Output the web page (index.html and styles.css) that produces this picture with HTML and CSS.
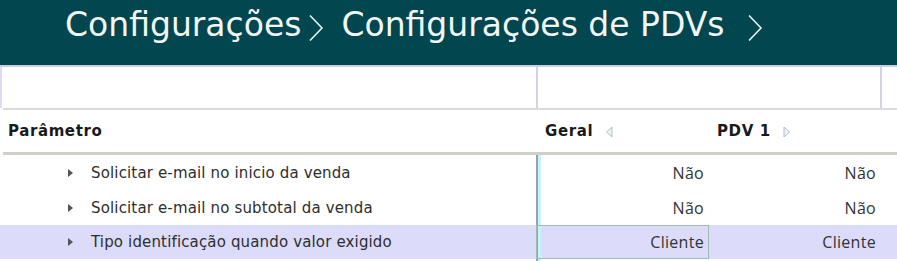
FILE: index.html
```html
<!DOCTYPE html>
<html lang="pt">
<head>
<meta charset="utf-8">
<link rel="stylesheet" href="styles.css">
</head>
<body>
<header class="title">
  <span class="crumb">Configurações</span>
  <svg class="chev" width="16" height="28" viewBox="0 0 16 28"><path d="M2 1.5 L14 14 L2 26.5" fill="none" stroke="#e8f0f0" stroke-width="1.6"/></svg>
  <span class="crumb">Configurações de PDVs</span>
  <svg class="chev chev-last" width="16" height="28" viewBox="0 0 16 28"><path d="M2 1.5 L14 14 L2 26.5" fill="none" stroke="#e8f0f0" stroke-width="1.6"/></svg>
</header>
<div class="grid">
  <div class="row blank">
    <div class="cell c-param"></div>
    <div class="cell c-span"></div>
    <div class="cell c-rest"></div>
  </div>
  <div class="row head">
    <div class="cell c-param"><b>Parâmetro</b></div>
    <div class="cell c-val hcell"><b>Geral</b>
      <svg class="tri" width="8" height="12" viewBox="0 0 8 12"><path d="M7 1 L1.5 6 L7 11 Z" fill="#eef0f6" stroke="#b8bccc" stroke-width="1"/></svg>
    </div>
    <div class="cell c-val hcell"><b>PDV 1</b>
      <svg class="tri" width="8" height="12" viewBox="0 0 8 12"><path d="M1 1 L6.5 6 L1 11 Z" fill="#eef0f6" stroke="#b8bccc" stroke-width="1"/></svg>
    </div>
    <div class="cell c-rest"></div>
  </div>
  <div class="row data">
    <div class="cell c-param"><span class="arrow"></span>Solicitar e-mail no inicio da venda</div>
    <div class="cell c-val num first">Não</div>
    <div class="cell c-val num">Não</div>
    <div class="cell c-rest"></div>
  </div>
  <div class="row data">
    <div class="cell c-param"><span class="arrow"></span>Solicitar e-mail no subtotal da venda</div>
    <div class="cell c-val num first">Não</div>
    <div class="cell c-val num">Não</div>
    <div class="cell c-rest"></div>
  </div>
  <div class="row data sel">
    <div class="cell c-param"><span class="arrow"></span>Tipo identificação quando valor exigido</div>
    <div class="cell c-val num first focus">Cliente</div>
    <div class="cell c-val num">Cliente</div>
    <div class="cell c-rest"></div>
  </div>
  <div class="row data tail">
    <div class="cell c-param"></div>
    <div class="cell c-val num first"></div>
    <div class="cell c-val num"></div>
    <div class="cell c-rest"></div>
  </div>
</div>
</body>
</html>
```
FILE: styles.css
```css
html, body {
  margin: 0;
  padding: 0;
  background: #ffffff;
}
body {
  width: 897px;
  height: 261px;
  overflow: hidden;
  font-family: "DejaVu Sans", Verdana, sans-serif;
}
.title {
  height: 67px;
  background: #02474f;
  color: #f2f6f6;
  display: flex;
  align-items: flex-start;
  padding-left: 65px;
  padding-top: 6px;
  box-sizing: border-box;
  border-bottom: 2px solid #c6d0e2;
  font-size: 33px;
  line-height: 38px;
}
.chev {
  margin: 8px 17px 0 7px;
}
.chev-last {
  margin-left: 22px;
}
.grid {
  display: flex;
  flex-direction: column;
}
.row {
  display: flex;
}
.cell {
  box-sizing: border-box;
  display: flex;
  align-items: center;
}
.c-param { width: 537px; }
.c-val { width: 172px; }
.c-span { width: 344px; }
.c-rest { flex: 1; }
.blank {
  height: 41px;
  border-left: 2px solid #dcdcf4;
}
.blank .c-param { width: 534px; }
.blank .c-span { border-left: 2px solid #d2d2e4; }
.blank .c-rest { border-left: 2px solid #d2d2e4; }
.head {
  height: 42px;
  border-top: 2px solid #dadae2;
  border-bottom: 3px solid #cfcfc6;
  margin-left: 3px;
  font-size: 15px;
  color: #1a1a1a;
}
.head .c-param { width: 534px; padding-left: 5px; }
.head b { font-weight: bold; letter-spacing: 0.6px; }
.hcell { padding-left: 8px; }
.tri { margin-left: 12px; margin-top: 1px; }
.data {
  height: 35px;
  font-size: 15px;
  letter-spacing: 0.15px;
  color: #2e2e2e;
}
.data.sel { height: 34px; }
.data .c-param { width: 536px; padding-left: 68px; }
.arrow {
  width: 0;
  height: 0;
  border-top: 4px solid transparent;
  border-bottom: 4px solid transparent;
  border-left: 5px solid #555555;
  margin-right: 18px;
}
.num {
  justify-content: flex-end;
  padding-right: 5px;
  font-family: "Open Sans", sans-serif;
  font-size: 16px;
  letter-spacing: 0.3px;
  color: #333333;
}
.first {
  width: 173px;
  border-left: 2px solid #9aa0a8;
  box-shadow: inset 3px 0 0 #c8f2fa;
}
.sel {
  background: #dcdcfa;
}
.focus {
  outline: 1px solid #9ebcb2;
  outline-offset: -1px;
}
.tail { height: 10px; }
```
